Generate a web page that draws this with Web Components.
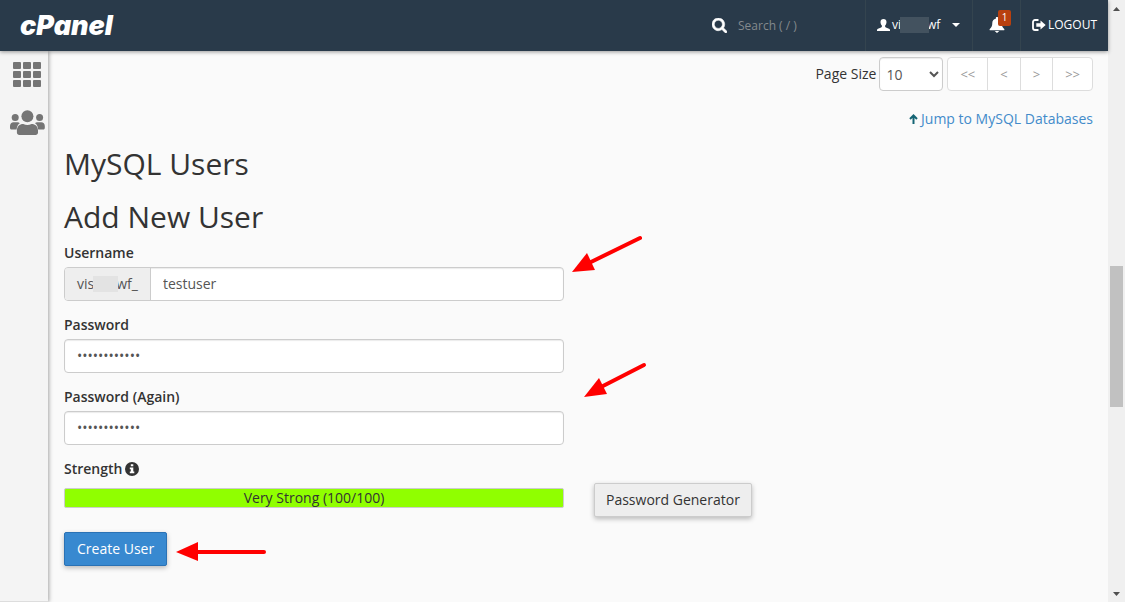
<!DOCTYPE html>
<html lang="en">
<head>
<meta charset="utf-8">
<title>cPanel - MySQL Databases</title>
<style>
  html, body { height: 100%; margin: 0; }
  body {
    font-family: "Open Sans", "Noto Sans", sans-serif;
    font-size: 14px;
    line-height: 20px;
    color: #333;
    background: #fafafa;
  }
</style>
</head>
<body>
<cp-app></cp-app>

<script>
function define(name, html, setup) {
  const template = document.createElement('template');
  template.innerHTML = '<style>*{box-sizing:border-box}</style>' + html;
  customElements.define(name, class extends HTMLElement {
    constructor() {
      super();
      this.attachShadow({ mode: 'open' }).append(template.content.cloneNode(true));
    }
    connectedCallback() { if (setup) setup(this, this.shadowRoot); }
  });
}

/* Blurred-out part of an account name */
define('cp-redacted', `
  <style>
    :host { display: inline-block; width: var(--redacted-width, 29px); height: 16px; margin: 0 -2px 0 -1px; background: var(--redacted-color, #43525f); vertical-align: middle; position: relative; }
  </style>`);

/* Top bar */
define('cp-header', `
  <style>
    :host { display: flex; align-items: stretch; height: 51px; background: #293a4a; color: #fff; box-shadow: 0 1px 4px rgba(0,0,0,.4); position: relative; z-index: 2; }
    a, button { color: inherit; font: inherit; text-decoration: none; background: none; border: 0; padding: 0; display: flex; align-items: center; }
    .logo { margin-right: auto; padding-left: 20px; font: italic 900 27px/51px Inter, "Open Sans", sans-serif; }
    .search { display: flex; align-items: center; gap: 11px; width: 153px; }
    .search input { width: 100px; min-width: 0; border: 0; padding: 0; background: none; color: #fff; font: inherit; font-size: 12px; outline: 0; }
    .search input::placeholder { color: #84898d; opacity: 1; }
    .cell { border-left: 1px solid #34444f; padding: 0 12px 2px; flex: none; font-size: 12px; }
    .user { width: 107px; gap: 2px; padding-left: 11px; }
    .user .name { display: flex; align-items: center; }
    .user .caret { margin-left: auto; }
    .bell { position: relative; width: 48px; padding: 0 15px 2px 16px; }
    .badge { position: absolute; left: 25px; top: 10px; width: 13px; height: 16px; border-radius: 2px; background: #b8400f; font-size: 10px; line-height: 15px; text-align: center; }
    .out { width: 88px; gap: 2px; padding: 0 11px 2px; white-space: nowrap; }
    svg { display: block; flex: none; }
  </style>
  <a class="logo" href="#" aria-label="cPanel">cPanel</a>
  <label class="search">
    <svg width="15" height="15" viewBox="64 128 1664 1664" fill="#fff" stroke="#fff" stroke-width="60" aria-hidden="true"><path d="M1216 832q0-185-131.500-316.500t-316.500-131.500-316.500 131.500-131.500 316.500 131.500 316.500 316.500 131.500 316.500-131.500 131.500-316.500zm512 832q0 52-38 90t-90 38q-54 0-90-38l-343-342q-179 124-399 124-143 0-273.500-55.500t-225-150-150-225-55.500-273.500 55.500-273.500 150-225 225-150 273.500-55.500 273.500 55.500 225 150 150 225 55.500 273.500q0 220-124 399l343 343q37 37 37 90z"/></svg>
    <input type="text" placeholder="Search ( / )" aria-label="Search">
  </label>
  <button class="cell user">
    <svg width="13" height="12" viewBox="0 0 13 12" fill="#fff" aria-hidden="true"><path d="M6.500 0C8.400 0 9.500 1.300 9.500 3c0 1.500-.6 2.800-1.400 3.600v1c0 .5.300.7.800.9l3.100 1.200c.7.300 1 .8 1 1.500v.8H0v-.8c0-.7.300-1.200 1-1.500l3.100-1.200c.5-.2.8-.4.800-.9v-1C4.100 5.800 3.500 4.500 3.500 3c0-1.700 1.100-3 3-3z"/></svg>
    <span class="name">vi<cp-redacted></cp-redacted>wf</span>
    <svg class="caret" width="8" height="4" viewBox="0 0 8 4" fill="#fff" aria-hidden="true"><path d="M0 0h8L4 4z"/></svg>
  </button>
  <button class="cell bell" aria-label="Notifications">
    <svg width="16" height="16" viewBox="0 0 16 16" fill="#fff" aria-hidden="true"><path d="M8 0c.8 0 1.200.5 1.200 1.200v.5C11.500 2.200 12.700 4 12.700 6c0 3 .8 4.500 2.500 6 .5.500.3 1.300-.5 1.300H1.300c-.8 0-1-.8-.5-1.300 1.700-1.500 2.500-3 2.500-6 0-2 1.200-3.800 3.500-4.300v-.5C6.800.5 7.200 0 8 0zM5.700 14h4.600L8 16z"/></svg>
    <span class="badge">1</span>
  </button>
  <a class="cell out" href="#">
    <svg width="14" height="12" viewBox="0 0 14 12" aria-hidden="true"><path d="M6.500 1H3a2 2 0 0 0-2 2v6a2 2 0 0 0 2 2h3.500" fill="none" stroke="#fff" stroke-width="1.800"/><path d="M8.500 1.500 13.700 6l-5.200 4.500V7.800H4.300V4.200h4.200z" fill="#fff"/></svg>
    LOGOUT
  </a>`);

/* Left icon rail */
define('cp-sidebar', `
  <style>
    :host { display: block; width: 48px; flex: none; background: #f4f4f4; box-shadow: 1px 0 4px rgba(0,0,0,.35); border-bottom: 1px solid #ddd; }
    nav { display: flex; flex-direction: column; gap: 22px; padding-top: 11px; }
    a { display: flex; justify-content: center; padding-left: 6px; height: 26px; }
    svg { display: block; flex: none; }
  </style>
  <nav>
    <a href="#" aria-label="Tools"><svg width="28" height="26" viewBox="0 0 28 26" fill="#757575"><rect width="8" height="7" rx="1"/><rect x="10" width="8" height="7" rx="1"/><rect x="20" width="8" height="7" rx="1"/><rect y="9" width="8" height="7" rx="1"/><rect x="10" y="9" width="8" height="7" rx="1"/><rect x="20" y="9" width="8" height="7" rx="1"/><rect y="18" width="8" height="7" rx="1"/><rect x="10" y="18" width="8" height="7" rx="1"/><rect x="20" y="18" width="8" height="7" rx="1"/></svg></a>
    <a href="#" aria-label="User manager"><svg width="35" height="26" viewBox="0 0 35 26" fill="#757575"><circle cx="5.200" cy="7.500" r="3.500"/><circle cx="29.600" cy="7.500" r="3.500"/><circle cx="17.400" cy="6.200" r="6"/><path d="M3.500 12.300h4c1 0 1.700.3 2.300.9-2 1.300-2.900 3.400-3.200 6.200H1.500c-.9 0-1.500-.6-1.500-1.500v-2c0-2 1.500-3.600 3.500-3.600zM31.300 12.300h-4c-1 0-1.700.3-2.300.9 2 1.300 2.900 3.400 3.200 6.200h5.100c.9 0 1.500-.6 1.500-1.500v-2c0-2-1.500-3.600-3.500-3.600zM13.300 14c2.700 1.200 5.500 1.200 8.200 0 3.900 0 6.500 2.700 6.500 6.500v2.100c0 1.500-1 2.400-2.500 2.400H9.400c-1.500 0-2.500-.9-2.500-2.400v-2.100c0-3.800 2.600-6.500 6.400-6.500z"/></svg></a>
  </nav>`);

/* Page size and page buttons */
define('cp-pager', `
  <style>
    :host { display: flex; justify-content: flex-end; align-items: center; height: 34px; }
    select { width: 64px; height: 34px; margin: 0 4px 0 3px; padding: 0 0 0 2px; border: 1px solid #ccc; border-radius: 4px; background: #fff; color: #555; font: inherit; box-shadow: inset 0 1px 1px rgba(0,0,0,.08); }
    .pages { display: flex; height: 34px; border: 1px solid #ddd; border-radius: 4px; background: #fff; }
    button { border: 0; border-left: 1px solid #ddd; padding: 0 12px; background: none; color: #999; font: inherit; font-size: 13px; }
    button:first-child { border-left: 0; }
  </style>
  <label for="size">Page Size</label>
  <select id="size"><option>10</option><option>20</option><option>50</option><option>100</option></select>
  <div class="pages"><button>&lt;&lt;</button><button>&lt;</button><button>&gt;</button><button>&gt;&gt;</button></div>`);

/* Labelled text box with an optional prefix slot */
define('cp-field', `
  <style>
    :host { display: block; position: relative; max-width: 500px; margin-bottom: 14px; }
    label { display: block; font-weight: 600; margin-bottom: 4px; }
    .group { display: flex; height: 34px; border: 1px solid #ccc; border-radius: 4px; background: #fff; overflow: hidden; box-shadow: inset 0 1px 1px rgba(0,0,0,.08); }
    ::slotted([slot="prefix"]) { display: flex; align-items: center; padding: 0 12px; background: #eee; border-right: 1px solid #ccc; color: #555; --redacted-width: 25px; --redacted-color: #e3e3e3; }
    input { flex: 1; min-width: 0; border: 0; padding: 0 12px; background: none; color: #555; font: inherit; outline: 0; }
  </style>
  <label for="box"></label>
  <div class="group"><slot name="prefix"></slot><input id="box"></div>
  <slot name="note"></slot>`, (host, root) => {
  root.querySelector('label').textContent = host.getAttribute('label');
  const input = root.querySelector('input');
  input.type = host.getAttribute('type') || 'text';
  input.value = host.getAttribute('value') || '';
});

/* Password strength meter */
define('cp-strength', `
  <style>
    :host { display: block; }
    .label { display: flex; align-items: center; gap: 3px; font-weight: 600; margin-bottom: 4px; }
    .row { display: flex; gap: 30px; align-items: flex-start; }
    .bar { flex: 0 1 500px; height: 20px; margin-top: 5px; border: 1px solid #ccc; border-radius: 2px; background: #90ff00; line-height: 18px; text-align: center; }
  </style>
  <div class="label">Strength <svg width="14" height="14" viewBox="0 0 14 14" aria-hidden="true"><circle cx="7" cy="7" r="7" fill="#333"/><path d="M5.800 2.300h2.500v2H5.800zM4.800 5.600h3.500v4h1v1.700H4.800V9.600h1V7.300h-1z" fill="#fff"/></svg></div>
  <div class="row"><div class="bar">Very Strong (100/100)</div><slot></slot></div>`);

define('cp-button', `
  <style>
    :host { display: inline-block; flex: none; vertical-align: top; }
    button { display: block; height: 34px; padding: 0 11px; border: 1px solid #ccc; border-radius: 2px; background: #eee; color: #333; font: inherit; box-shadow: 0 2px 5px rgba(0,0,0,.26); }
    :host([primary]) button { padding: 0 12px; background: #3889d0; border-color: #2a72b5; color: #fff; }
  </style>
  <button type="button"><slot></slot></button>`);

/* Red pointer drawn over the page */
define('cp-arrow', `
  <style>
    :host { display: block; position: absolute; }
    svg { display: block; overflow: visible; }
    line { stroke: #f00; stroke-width: 4; stroke-linecap: round; }
  </style>
  <svg width="90" height="40" aria-hidden="true"><polygon fill="#f00"/><line/></svg>`, (host, root) => {
  root.querySelector('polygon').setAttribute('points', host.getAttribute('head'));
  const [x1, y1, x2, y2] = host.getAttribute('shaft').split(' ');
  const line = root.querySelector('line');
  Object.entries({ x1, y1, x2, y2 }).forEach(([k, v]) => line.setAttribute(k, v));
});

define('cp-users-page', `
  <style>
    :host { display: block; flex: 1; min-width: 0; padding: 6px 15px 0 16px; }
    .jump { display: flex; justify-content: flex-end; align-items: center; gap: 3px; margin: 18px 0; color: #428bca; text-decoration: none; }
    .jumprow { display: flex; justify-content: flex-end; }
    h2 { margin: 0 0 20px; font-size: 30px; line-height: 33px; font-weight: 380; }
    h2 + h2 { margin-bottom: 10px; }
    cp-arrow[slot="note"] { left: 508px; top: -6px; }
    cp-arrow.again { left: 520px; top: -22px; }
    .actions { display: flex; position: relative; margin-top: 15px; }
    .actions cp-arrow { left: 112px; top: 10px; }
  </style>
  <cp-pager></cp-pager>
  <div class="jumprow"><a class="jump" href="#"><svg width="9" height="10" viewBox="0 0 9 10" fill="none" stroke="#146474" stroke-width="2" aria-hidden="true"><path d="M4.500 10V1.500M1 5l3.500-3.500L8 5"/></svg>Jump to MySQL Databases</a></div>
  <h2>MySQL Users</h2>
  <h2>Add New User</h2>
  <cp-field label="Username" value="testuser">
    <span slot="prefix">vis<cp-redacted></cp-redacted>wf_</span>
    <cp-arrow slot="note" head="0,35 15,16 23,33" shaft="19 25 68 1"></cp-arrow>
  </cp-field>
  <cp-field label="Password" type="password" value="abcdefghijkl"></cp-field>
  <cp-field label="Password (Again)" type="password" value="abcdefghijkl">
    <cp-arrow slot="note" class="again" head="0,32 15,13 23,29" shaft="19 21 60 0"></cp-arrow>
  </cp-field>
  <cp-strength><cp-button>Password Generator</cp-button></cp-strength>
  <div class="actions">
    <cp-button primary>Create User</cp-button>
    <cp-arrow head="0,10 22,0 22,19" shaft="22 10 88 10"></cp-arrow>
  </div>`);

/* Window scroll bar */
define('cp-scrollbar', `
  <style>
    :host { display: grid; grid-template-rows: 17px 249fr 141fr 178fr 17px; width: 17px; flex: none; background: #f0f0f0; }
    svg { display: block; margin: auto; }
    .thumb { grid-row: 3; margin: 0 2px; background: #c1c1c1; }
    .down { grid-row: 5; }
  </style>
  <svg width="7" height="4" viewBox="0 0 7 4" fill="#505050" aria-hidden="true"><path d="M0 4h7L3.500 0z"/></svg>
  <div class="thumb"></div>
  <svg class="down" width="7" height="4" viewBox="0 0 7 4" fill="#505050" aria-hidden="true"><path d="M0 0h7L3.500 4z"/></svg>`);

define('cp-app', `
  <style>
    :host { display: flex; min-height: 100vh; }
    .main { flex: 1; min-width: 0; display: flex; flex-direction: column; }
    .body { flex: 1; display: flex; }
  </style>
  <div class="main">
    <cp-header></cp-header>
    <div class="body"><cp-sidebar></cp-sidebar><cp-users-page></cp-users-page></div>
  </div>
  <cp-scrollbar></cp-scrollbar>`);
</script>
</body>
</html>
